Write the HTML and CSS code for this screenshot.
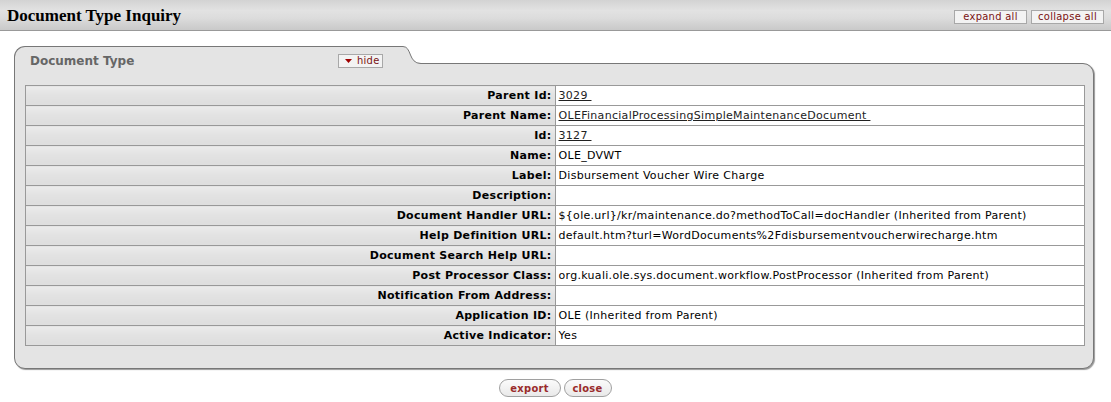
FILE: index.html
```html
<!DOCTYPE html>
<html>
<head>
<meta charset="utf-8">
<title>Document Type Inquiry</title>
<link rel="stylesheet" href="styles.css">
</head>
<body>
<div class="header">
  <h1 class="title">Document Type Inquiry</h1>
  <div class="header-actions">
    <button class="hbtn hbtn-expand">expand all</button>
    <button class="hbtn hbtn-collapse">collapse all</button>
  </div>
</div>

<div class="panel">
  <div class="tab-row">
    <div class="tab">
      <span class="tab-title">Document Type</span>
      <button class="hide-btn"><svg class="tri" width="7" height="4" viewBox="0 0 7 4"><path d="M0 0H7L3.5 4Z" fill="#a00000"/></svg>hide</button>
    </div>
    <svg class="tab-curve" width="18" height="18" viewBox="0 0 18 18">
      <path d="M0 0.5 C9 0.5 5 17.5 18 17.5 L18 18 L0 18 Z" fill="#e4e4e4"/>
      <path d="M0 0.5 C9 0.5 5 17.5 18 17.5" fill="none" stroke="#777" stroke-width="1"/>
    </svg>
  </div>
  <div class="panel-body">
    <table class="grid">
      <tr><th>Parent Id:</th><td><a href="#">3029&nbsp;</a></td></tr>
      <tr><th>Parent Name:</th><td><a href="#">OLEFinancialProcessingSimpleMaintenanceDocument&nbsp;</a></td></tr>
      <tr><th>Id:</th><td><a href="#">3127&nbsp;</a></td></tr>
      <tr><th>Name:</th><td>OLE_DVWT</td></tr>
      <tr><th>Label:</th><td>Disbursement Voucher Wire Charge</td></tr>
      <tr><th>Description:</th><td></td></tr>
      <tr><th>Document Handler URL:</th><td>${ole.url}/kr/maintenance.do?methodToCall=docHandler (Inherited from Parent)</td></tr>
      <tr><th>Help Definition URL:</th><td>default.htm?turl=WordDocuments%2Fdisbursementvoucherwirecharge.htm</td></tr>
      <tr><th>Document Search Help URL:</th><td></td></tr>
      <tr><th>Post Processor Class:</th><td>org.kuali.ole.sys.document.workflow.PostProcessor (Inherited from Parent)</td></tr>
      <tr><th>Notification From Address:</th><td></td></tr>
      <tr><th>Application ID:</th><td>OLE (Inherited from Parent)</td></tr>
      <tr><th>Active Indicator:</th><td>Yes</td></tr>
    </table>
  </div>
</div>

<div class="footer-actions">
  <button class="pill pill-export">export</button>
  <button class="pill pill-close">close</button>
</div>
</body>
</html>
```

FILE: styles.css
```css
* { box-sizing: border-box; }
html, body { margin: 0; padding: 0; background: #fff; }
body { font-family: "DejaVu Sans", Verdana, sans-serif; font-size: 11px; color: #000; }

.header {
  height: 31px;
  display: flex;
  align-items: flex-start;
  justify-content: space-between;
  background: linear-gradient(to bottom, #d3d3d3 0%, #e2e2e2 35%, #dcdcdc 60%, #c9c9c9 100%);
  border-bottom: 1px solid #999;
}
.title {
  margin: 0;
  padding: 5px 0 0 7px;
  font-family: "Liberation Serif", "Times New Roman", serif;
  font-weight: bold;
  font-size: 17px;
  line-height: 21px;
}
.header-actions { display: flex; gap: 4px; padding: 10px 7px 0 0; }
.hbtn {
  font-family: "DejaVu Sans Condensed", "DejaVu Sans", sans-serif;
  font-size: 11px;
  letter-spacing: 0.3px;
  height: 14px;
  width: 73px;
  padding: 0;
  line-height: 12px;
  color: #7a1212;
  background: #f3f3f3;
  border: 1px solid #a8a8a8;
  margin: 0;
}

.panel { margin: 15px 17px 0 14px; }
.tab-row { display: flex; height: 18px; margin-bottom: -1px; position: relative; z-index: 1; }
.tab {
  width: 389px;
  height: 18px;
  display: flex;
  align-items: flex-start;
  padding: 7px 20px 0 15px;
  background: #e4e4e4;
  border-top: 1px solid #777;
  border-left: 1px solid #777;
  border-top-left-radius: 11px;
}
.tab-title { font-weight: bold; font-size: 12px; line-height: 14px; color: #666; }
.hide-btn {
  margin: 0 0 0 auto;
  height: 14px;
  width: 45px;
  padding: 0 0 0 6px;
  display: flex;
  align-items: center;
  gap: 5px;
  font-family: "DejaVu Sans Condensed", "DejaVu Sans", sans-serif;
  font-size: 11px;
  letter-spacing: 0.3px;
  line-height: 12px;
  color: #7a1212;
  background: #f3f3f3;
  border: 1px solid #a8a8a8;
}
.tab-curve { display: block; flex: none; }

.panel-body {
  background: #e4e4e4;
  border: 1px solid #777;
  border-radius: 0 11px 11px 11px;
  box-shadow: 1px 1px 1px #999;
  padding: 21px 8px 22px 10px;
}
.grid { width: 100%; border-collapse: collapse; border: 1px solid #999; }
.grid th, .grid td {
  border: 1px solid #999;
  height: 20px;
  padding: 0 3px;
  line-height: 15px;
  white-space: nowrap;
  letter-spacing: 0.3px;
}
.grid th {
  width: 50%;
  text-align: right;
  font-weight: bold;
  background: linear-gradient(to bottom, #ececec 0%, #e2e2e2 45%, #dedede 100%);
}
.grid td { background: #fff; text-align: left; }
.grid a { color: #222; text-decoration: underline; }

.footer-actions { display: flex; justify-content: center; gap: 3px; padding: 10px 0 0 0; margin-left: -1px; }
.pill {
  height: 18px;
  padding: 0;
  font-family: "DejaVu Sans Condensed", "DejaVu Sans", sans-serif;
  font-size: 11px;
  font-weight: bold;
  letter-spacing: 0.3px;
  color: #9a2b2b;
  background: linear-gradient(to bottom, #fbfbfb, #e9e9e9);
  border: 1px solid #a0a0a0;
  border-radius: 9px;
  margin: 0;
}
.pill-export { width: 62px; }
.pill-close { width: 48px; }
```
